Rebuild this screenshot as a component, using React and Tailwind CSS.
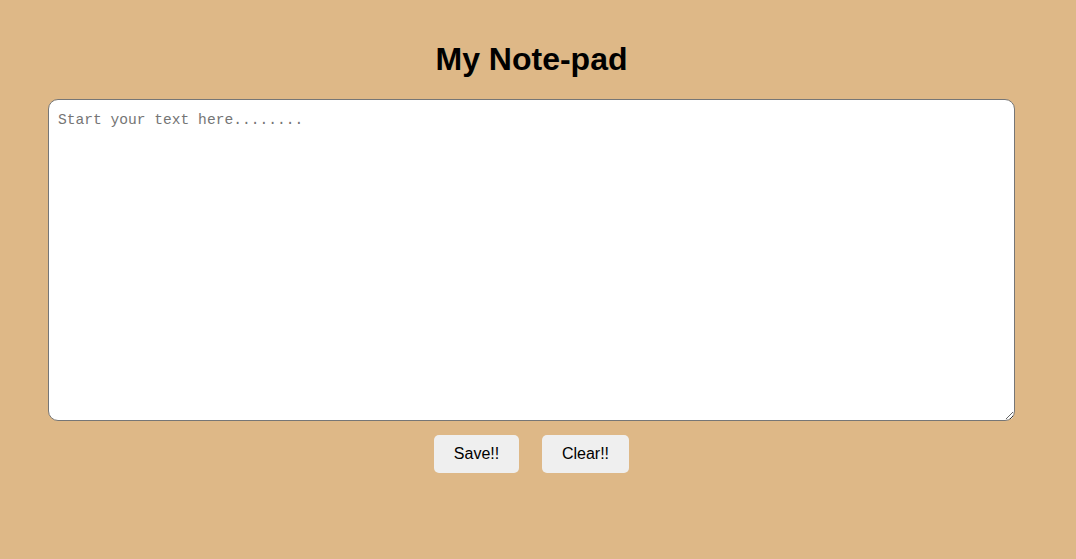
export default function App() {
  return (
    <div className="min-h-[559px] bg-[#deb887] font-['Liberation_Sans',Arial,sans-serif]">
      <div className="ml-[48px] w-[967px] pt-[41px] flex flex-col items-center">
        <h1 className="text-[32px] leading-[37px] font-bold text-black">My Note-pad</h1>
        <textarea
          className="mt-[21px] w-[967px] h-[322px] bg-white border border-[#767676] rounded-[10px] px-[9px] pt-[11px] font-['Liberation_Mono',monospace] text-[14.6px] leading-[18px] text-black placeholder:text-[#757575] outline-none"
          placeholder="Start your text here........"
        />
        <div className="mt-[14px] flex gap-[23px]">
          <button className="h-[38px] w-[85px] bg-[#efefef] rounded-[5px] text-[16px] text-black">Save!!</button>
          <button className="h-[38px] w-[87px] bg-[#efefef] rounded-[5px] text-[16px] text-black">Clear!!</button>
        </div>
      </div>
    </div>
  );
}
